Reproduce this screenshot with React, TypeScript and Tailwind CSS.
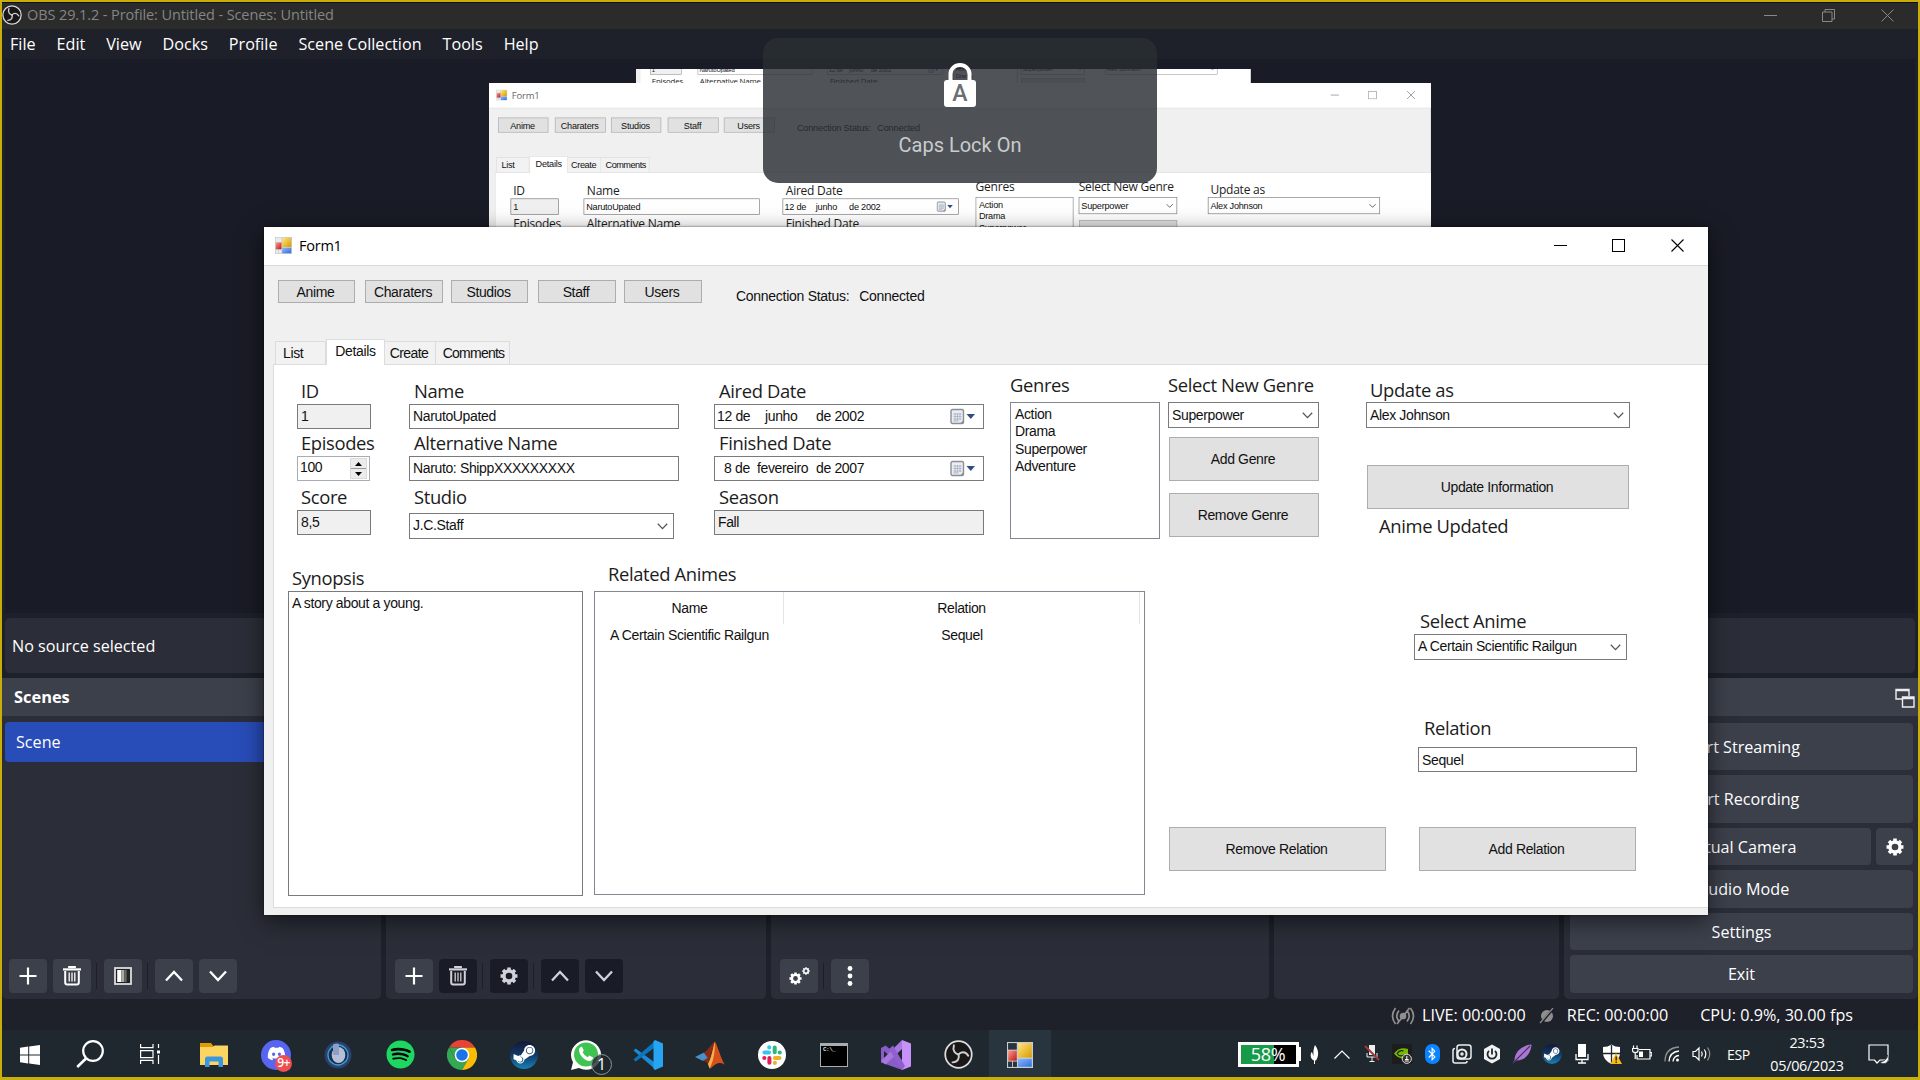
import React from "react";
import { FaBluetoothB, FaDiscord, FaSpotify, FaSteamSymbol, FaWhatsapp } from "react-icons/fa";

type P = { children?: React.ReactNode; className?: string };

/* ---------- WinForms window ---------- */

function FormIcon({ size = 17 }: { size?: number }) {
  return (
    <svg width={size} height={size} viewBox="0 0 17 17">
      <defs>
        <linearGradient id="fy" x1="0" y1="0" x2="1" y2="1">
          <stop offset="0" stopColor="#ffe680" />
          <stop offset="1" stopColor="#d99a00" />
        </linearGradient>
        <linearGradient id="fb" x1="0" y1="0" x2="1" y2="1">
          <stop offset="0" stopColor="#8ab8ff" />
          <stop offset="1" stopColor="#2f6ee0" />
        </linearGradient>
        <linearGradient id="fr" x1="0" y1="0" x2="1" y2="1">
          <stop offset="0" stopColor="#ff9a8a" />
          <stop offset="1" stopColor="#c01818" />
        </linearGradient>
      </defs>
      <rect x="0" y="0" width="17" height="17" fill="#c9ccd1" />
      <rect x="0.7" y="0.7" width="5.700" height="4.300" fill={size > 20 ? "#28343e" : "#e8eaee"} />
      <rect x="0.7" y="12.800" width="2.600" height="3.500" fill={size > 20 ? "#28343e" : "#e8eaee"} />
      <rect x="3.900" y="12.800" width="2.600" height="3.500" fill={size > 20 ? "#28343e" : "#e8eaee"} />
      <rect x="0.8" y="5.600" width="5.600" height="6.600" fill="url(#fr)" />
      <rect x="7.200" y="0.8" width="9" height="9.400" fill="url(#fy)" />
      <rect x="7.200" y="11" width="9" height="5.200" fill="url(#fb)" />
    </svg>
  );
}

function Label({ children, className = "", pad = "pl-[5px]" }: P & { pad?: string }) {
  return (
    <div className={`whitespace-nowrap pb-[2px] font-['Open_Sans',sans-serif] text-[18.4px] leading-[22px] text-[#1c1c1c] ${pad} ${className}`}>
      {children}
    </div>
  );
}

function Box({ children, className = "" }: P) {
  return <div className={`flex items-center whitespace-pre border border-[#7a7a7a] pl-[3px] ${className}`}>{children}</div>;
}

function Combo({ children, className = "" }: P) {
  return (
    <div className={`flex items-center justify-between border border-[#7a7a7a] bg-white pl-[3px] pr-[5px] ${className}`}>
      <span className="whitespace-nowrap">{children}</span>
      <svg width="11" height="7" viewBox="0 0 11 7" className="mt-px">
        <path d="M0.8 0.8 L5.5 5.6 L10.2 0.8" fill="none" stroke="#555" strokeWidth="1.3" />
      </svg>
    </div>
  );
}

function WinButton({ children, className = "" }: P) {
  return (
    <div className={`flex items-center justify-center whitespace-nowrap border border-[#adadad] bg-[#e1e1e1] pr-[2px] pt-px ${className}`}>
      {children}
    </div>
  );
}

function DateBox({ day, month, year, pad }: { day: string; month: string; year: string; pad: string }) {
  return (
    <div className="flex h-[25px] items-center border border-[#7a7a7a] bg-white pr-[7px]">
      <span className={`w-[42px] whitespace-pre ${pad}`}>{day}</span>
      <span className={`whitespace-nowrap ${month === "junho" ? "w-[59px] pl-[8px]" : "w-[59px]"}`}>{month}</span>
      <span className="flex-1 whitespace-nowrap">{year}</span>
      <svg width="26" height="17" viewBox="0 0 26 17">
        <rect x="1" y="1.5" width="12.5" height="14" rx="1.5" fill="#e9ecf2" stroke="#8a8f99" strokeWidth="1.4" />
        <path d="M3.5 6h8M3.5 8.5h8M3.5 11h8M3.5 13h5M5 5v8M7.5 5v8M10 5v7" stroke="#aab0bd" strokeWidth="0.8" />
        <path d="M10 15.5l3.5-3.5v3.5z" fill="#8a8f99" />
        <path d="M16.5 6h8.5l-4.2 5z" fill="#2f4f84" />
      </svg>
    </div>
  );
}

function Form({ inactive = false }: { inactive?: boolean }) {
  const glyph = inactive ? "#777" : "#000";
  return (
    <div className="flex h-[688px] w-[1444px] flex-col bg-[#f0f0f0] font-['Liberation_Sans',sans-serif] text-[14px] leading-[17px] tracking-[-0.36px] text-[#111]">
      <div className="flex h-[39px] shrink-0 items-center border-b border-[#d9d9d9] bg-white pb-px pl-[11px] pr-[24px]">
        <FormIcon />
        <span className={`ml-[7px] flex-1 pb-px font-['Open_Sans',sans-serif] text-[14.5px] tracking-[-0.25px] ${inactive ? "text-[#666]" : "text-black"}`}>
          Form1
        </span>
        <svg width="13" height="13" viewBox="0 0 13 13">
          <path d="M0 6.5h13" stroke={glyph} />
        </svg>
        <svg width="13" height="13" viewBox="0 0 13 13" className="ml-[45px]">
          <rect x="0.5" y="0.5" width="12" height="12" fill="none" stroke={glyph} />
        </svg>
        <svg width="13" height="13" viewBox="0 0 13 13" className="ml-[46px]">
          <path d="M0.5 0.5l12 12M12.5 0.5l-12 12" stroke={glyph} strokeWidth="1.1" />
        </svg>
      </div>

      <div className="flex h-[73px] shrink-0 pl-[14px] pt-[14px]">
        <WinButton className="h-[23px] w-[77px]">Anime</WinButton>
        <WinButton className="ml-[10px] h-[23px] w-[78px]">Charaters</WinButton>
        <WinButton className="ml-[8px] h-[23px] w-[77px]">Studios</WinButton>
        <WinButton className="ml-[10px] h-[23px] w-[78px]">Staff</WinButton>
        <WinButton className="ml-[8px] h-[23px] w-[78px]">Users</WinButton>
        <span className="ml-[34px] mt-[8px] tracking-[-0.28px]">Connection Status:</span>
        <span className="ml-[10px] mt-[8px] tracking-[-0.28px]">Connected</span>
      </div>

      <div className="flex h-[25px] shrink-0 items-end pl-[11px]">
        <div className="flex h-[23px] w-[51px] items-center border border-b-0 border-[#dcdcdc] bg-[#f2f2f2] pl-[7px] pt-px">List</div>
        <div className="z-10 -mb-px flex h-[26px] w-[59px] items-center justify-center border border-b-0 border-[#dcdcdc] bg-white pb-[2px]">
          Details
        </div>
        <div className="flex h-[23px] w-[51px] items-center justify-center border border-b-0 border-l-0 border-[#dcdcdc] bg-[#f2f2f2] pr-[2px] pt-px tracking-[-0.6px]">
          Create
        </div>
        <div className="flex h-[23px] w-[74px] items-center justify-center border border-b-0 border-l-0 border-[#dcdcdc] bg-[#f2f2f2] pl-[2px] pt-px tracking-[-0.75px]">
          Comments
        </div>
      </div>

      <div className="ml-[9px] flex h-[544px] flex-col border border-r-0 border-[#dcdcdc] bg-white">
        <div className="flex h-[185px] items-start">
          <div className="ml-[23px] mt-[15px] flex w-[74px] flex-col">
            <Label pad="pl-[4px]">ID</Label>
            <Box className="h-[25px] bg-[#f0f0f0]">1</Box>
            <Label className="mt-[3px]" pad="pl-[4px]">Episodes</Label>
            <div className="flex h-[25px] w-[73px] items-center border border-[#ababb5] bg-white pl-[2px] pr-[2px]">
              <span className="flex-1 pb-[2px]">100</span>
              <div className="flex h-[21px] w-[17px] flex-col border border-[#dadada] bg-[#ececec]">
                <div className="flex h-[10px] items-center justify-center border-b border-[#999]">
                  <svg width="7" height="4" viewBox="0 0 7 4"><path d="M0 4L3.5 0L7 4z" fill="#000" /></svg>
                </div>
                <div className="flex h-[9px] items-center justify-center">
                  <svg width="7" height="4" viewBox="0 0 7 4"><path d="M0 0L3.5 4L7 0z" fill="#000" /></svg>
                </div>
              </div>
            </div>
            <Label className="mt-[5px]" pad="pl-[4px]">Score</Label>
            <Box className="h-[25px] bg-[#f0f0f0] pb-px">8,5</Box>
          </div>

          <div className="ml-[38px] mt-[15px] flex w-[270px] flex-col">
            <Label>Name</Label>
            <Box className="h-[25px] bg-white">NarutoUpated</Box>
            <Label className="mt-[3px]">Alternative Name</Label>
            <Box className="h-[25px] bg-white">Naruto: ShippXXXXXXXXX</Box>
            <Label className="mt-[5px]">Studio</Label>
            <Combo className="mt-[3px] h-[26px] w-[265px] pb-px">J.C.Staff</Combo>
          </div>

          <div className="ml-[35px] mt-[15px] flex w-[270px] flex-col">
            <Label>Aired Date</Label>
            <DateBox day="12 de" month="junho" year="de 2002" pad="pl-[2px]" />
            <Label className="mt-[3px]">Finished Date</Label>
            <DateBox day="8 de" month="fevereiro" year="de 2007" pad="pl-[9px]" />
            <Label className="mt-[5px]">Season</Label>
            <Box className="h-[25px] bg-[#f0f0f0] pb-px">Fall</Box>
          </div>

          <div className="ml-[26px] mt-[9px] flex w-[150px] flex-col">
            <Label pad="pl-0">Genres</Label>
            <div className="mt-[4px] flex h-[137px] flex-col border border-[#828790] bg-white pl-[4px] pt-[3px] leading-[17.4px]">
              <span>Action</span>
              <span>Drama</span>
              <span>Superpower</span>
              <span>Adventure</span>
            </div>
          </div>

          <div className="ml-[8px] mt-[9px] flex w-[151px] flex-col">
            <Label pad="pl-0">Select New Genre</Label>
            <Combo className="mt-[4px] h-[26px]">Superpower</Combo>
            <WinButton className="ml-px mt-[9px] h-[44px]">Add Genre</WinButton>
            <WinButton className="ml-px mt-[12px] h-[44px]">Remove Genre</WinButton>
          </div>

          <div className="ml-[47px] mt-[14px] flex w-[264px] flex-col">
            <Label pad="pl-[4px]">Update as</Label>
            <Combo className="-mt-px h-[26px]">Alex Johnson</Combo>
            <WinButton className="mx-px mt-[37px] h-[44px]">Update Information</WinButton>
            <Label className="mt-[6px]" pad="pl-[13px]">Anime Updated</Label>
          </div>
        </div>

        <div className="flex items-start">
          <div className="ml-[14px] mt-[17px] flex w-[295px] flex-col">
            <Label pad="pl-[4px]">Synopsis</Label>
            <div className="h-[305px] border border-[#7a7a7a] bg-white pl-[3px] pt-[3px]">A story about a young.</div>
          </div>

          <div className="ml-[11px] mt-[13px] flex w-[551px] flex-col">
            <Label pad="pl-[14px]">Related Animes</Label>
            <div className="mt-[4px] flex h-[304px] flex-col border border-[#828790] bg-white text-center">
              <div className="flex h-[32px] items-center pr-[4px]">
                <div className="flex h-full w-[189px] items-center justify-center border-r border-[#e5e5e5] pl-px pt-px">Name</div>
                <div className="flex h-full flex-1 items-center justify-center border-r border-[#e5e5e5] pt-px">Relation</div>
              </div>
              <div className="flex pr-[4px] pt-[3px]">
                <div className="w-[189px] whitespace-nowrap">A Certain Scientific Railgun</div>
                <div className="flex-1">Sequel</div>
              </div>
            </div>
          </div>

          <WinButton className="ml-[24px] mt-[277px] h-[44px] w-[217px]">Remove Relation</WinButton>

          <div className="ml-[28px] mt-[60px] flex w-[224px] flex-col">
            <Label pad="pl-[6px]">Select Anime</Label>
            <Combo className="h-[26px] w-[213px] pb-px">A Certain Scientific Railgun</Combo>
            <Label className="mt-[57px]" pad="pl-[10px]">Relation</Label>
            <Box className="ml-[4px] mt-[6px] h-[25px] w-[219px] bg-white pt-px">Sequel</Box>
            <WinButton className="ml-[5px] mt-[55px] h-[44px] w-[217px]">Add Relation</WinButton>
          </div>
        </div>
      </div>
    </div>
  );
}

/* ---------- OBS chrome ---------- */

function ObsLogo({ size }: { size: number }) {
  return (
    <svg width={size} height={size} viewBox="0 0 28 28">
      <circle cx="14" cy="14" r="12.8" fill="#1a1718" stroke="#dcdcdc" strokeWidth="1.7" />
      <g fill="none" stroke="#cfcfcf" strokeWidth="1.9" strokeLinecap="round">
        <path d="M14 14C10.6 13.4 8 10 9.6 5.2" />
        <path d="M14 14C16.2 11.2 20.6 10.6 23.4 15.2" />
        <path d="M14 14C15.2 17.4 13.4 21.6 8.2 21.6" />
      </g>
    </svg>
  );
}

function Tool({ children, className = "", dark = false }: P & { dark?: boolean }) {
  return (
    <div className={`flex h-[34px] w-[38px] shrink-0 items-center justify-center rounded-[4px] pb-px ${dark ? "bg-[#191b26]" : "bg-[#3c404b]"} ${className}`}>
      {children}
    </div>
  );
}

const Sep = () => <div className="mx-[5px] h-[26px] w-px bg-[#1d1f28]" />;

const Plus = () => (
  <svg width="18" height="18" viewBox="0 0 18 18"><path d="M9 0.5v17M0.5 9h17" stroke="#fff" strokeWidth="2.2" /></svg>
);
const Trash = ({ c }: { c: string }) => (
  <svg width="20" height="20" viewBox="0 0 20 20" fill="none" stroke={c}>
    <path d="M1 3.4h18" strokeWidth="2.2" />
    <path d="M7 2V1h6v1" strokeWidth="1.8" />
    <path d="M3.2 5v11.5q0 2 2 2h9.600q2 0 2-2V5" strokeWidth="2" />
    <path d="M7.200 6.500v9M10 6.500v9M12.800 6.500v9" strokeWidth="1.3" />
  </svg>
);
const Chev = ({ c, up = false }: { c: string; up?: boolean }) => (
  <svg width="18" height="12" viewBox="0 0 18 12">
    <path d={up ? "M1 10.5L9 2L17 10.5" : "M1 1.5L9 10L17 1.5"} fill="none" stroke={c} strokeWidth="2.3" />
  </svg>
);
const Gear = ({ c, size = 18 }: { c: string; size?: number }) => (
  <svg width={size} height={size} viewBox="0 0 20 20">
    <circle cx="10" cy="10" r="5.6" fill="none" stroke={c} strokeWidth="3.8" />
    <path
      d="M10 0.6v3M10 16.4v3M0.6 10h3M16.4 10h3M3.35 3.35l2.1 2.1M14.55 14.55l2.1 2.1M3.35 16.65l2.1-2.1M14.55 5.45l2.1-2.1"
      stroke={c}
      strokeWidth="4"
    />
  </svg>
);

function SideButton({ children, className = "" }: P) {
  return <div className={`flex items-center justify-center rounded-[4px] bg-[#3c404b] pt-px ${className}`}>{children}</div>;
}

function Dock({ children, className = "" }: P) {
  return <div className={`flex shrink-0 flex-col justify-end rounded-b-[5px] bg-[#2b2e38] ${className}`}>{children}</div>;
}

/* ---------- Taskbar ---------- */

function Task({ children, active = false, line = false }: { children: React.ReactNode; active?: boolean; line?: boolean }) {
  return (
    <div className={`relative flex h-full w-[62px] shrink-0 items-center justify-center pt-[2px] ${active ? "bg-[#28343e]" : ""}`}>
      {children}
      {line && <div className="absolute -bottom-[3px] left-[6px] right-[5px] z-10 h-[2px] bg-[#e2cc30]" />}
    </div>
  );
}

const Tray = ({ children }: P) => <div className="flex w-[30px] shrink-0 items-center justify-center">{children}</div>;

function SteamDisc({ size }: { size: number }) {
  return (
    <div className={`flex items-center justify-center rounded-full bg-linear-to-b from-[#12183a] via-[#113a66] to-[#1583b8] ${size > 24 ? "size-[28px]" : "size-[20px]"}`}>
      <FaSteamSymbol size={size * 0.88} color="#fff" />
    </div>
  );
}

function Taskbar() {
  return (
    <div className="flex h-[47px] shrink-0 items-stretch bg-[#1e282e] text-white">
      <div className="ml-[-3px] flex w-[60px] items-center justify-center pl-px pt-[3px]">
        <svg width="20" height="20" viewBox="0 0 20 20" fill="#fff">
          <path d="M0 2.8L8.2 1.6v8H0zM9.2 1.4L20 0v9.6H9.2zM0 10.5h8.2v8L0 17.3zM9.2 10.5H20V20L9.2 18.6z" />
        </svg>
      </div>
      <div className="flex w-[61px] items-center justify-center pt-px">
        <svg width="28" height="28" viewBox="0 0 28 28" fill="none" stroke="#fff">
          <circle cx="17" cy="11" r="9.8" strokeWidth="2.2" />
          <path d="M10 18.5L1.2 27" strokeWidth="2.6" />
        </svg>
      </div>
      <div className="flex w-[60px] items-center justify-center pt-px">
        <svg width="20" height="20" viewBox="0 0 20 20" fill="none" stroke="#fff" strokeWidth="1.2">
          <path d="M0.6 0v3.6h12.4V0M0.6 20v-3.6h12.4V20M0.6 6.6h12.4v7H0.6zM18.5 0v4M18.5 11v9" />
          <path d="M17 6.5h3v3h-3z" fill="#fff" stroke="none" />
        </svg>
      </div>
      <div className="w-[3px]" />
      <Task>
        <svg width="28" height="24" viewBox="0 0 28 24">
          <path d="M0 0h11l2.4 3H28v8H0z" fill="#e09c00" />
          <path d="M0 4h13l1.5-1.5H28V22H0z" fill="#fcd462" />
          <path d="M5 24v-8q0-2.5 2.5-2.5h13Q23 13.5 23 16v8h-4.500v-5.500h-9V24z" fill="#3a96dd" />
        </svg>
      </Task>
      <Task line>
        <div className="relative flex size-[30px] items-center justify-center rounded-full bg-[#5865f2]">
          <FaDiscord size={19} color="#fff" className="-mt-[2px]" />
          <span className="absolute -bottom-[2px] -right-[1px] flex size-[17px] items-center justify-center rounded-full bg-[#ed4e50] text-[12px] font-semibold leading-none tracking-[-0.5px]">9+</span>
        </div>
      </Task>
      <Task>
        <svg width="28" height="28" viewBox="0 0 28 28">
          <circle cx="14" cy="14" r="13.500" fill="#2c3e72" />
          <circle cx="14" cy="14" r="10" fill="#1e2c50" stroke="#35a5c5" strokeWidth="1.3" />
          <ellipse cx="14.500" cy="14" rx="6.800" ry="8" fill="#b4bfda" />
          <path d="M9 3.500q5-2 6 0V14H9z" fill="#8f9fc4" />
        </svg>
      </Task>
      <Task>
        <div className="flex size-[27px] items-center justify-center rounded-full bg-black">
          <FaSpotify size={29} color="#1ed760" className="shrink-0" />
        </div>
      </Task>
      <Task line>
        <svg width="30" height="30" viewBox="0 0 30 30">
          <path d="M2 7.500A15 15 0 0 1 28 7.500H15z" fill="#ea4335" />
          <path d="M2 7.500A15 15 0 0 0 15 30L21.500 18.750 15 15 8.500 18.750z" fill="#34a853" />
          <path d="M28 7.500A15 15 0 0 1 15 30L21.500 18.750 15 7.500z" fill="#fbbc05" />
          <path d="M2 7.500L8.500 18.750 15 15V7.500z" fill="#34a853" />
          <circle cx="15" cy="15" r="7.300" fill="#fff" />
          <circle cx="15" cy="15" r="5.800" fill="#1a73e8" />
        </svg>
      </Task>
      <Task><SteamDisc size={28} /></Task>
      <Task>
        <div className="relative flex size-[30px] items-center justify-center">
          <svg width="30" height="30" viewBox="0 0 30 30" className="absolute">
            <path d="M0 30L2 22.300A15 14.700 0 1 1 8 28z" fill="#fff" />
            <circle cx="15" cy="14.500" r="12" fill="#3fc351" />
          </svg>
          <svg width="16" height="16" viewBox="0 0 16 16" className="relative -mt-px" fill="#fff">
            <path d="M1 3.500C1.500 1.500 3 0.500 4 0.800L5.800 4.600 4.600 6.300Q6.200 9.600 9.600 11.200L11.300 9.600 15 11.400C15.200 13.500 13 15.300 10.800 15 5.600 14 0.800 8.500 1 3.500z" />
          </svg>
          <span className="absolute -bottom-[5px] -right-[11px] flex size-[21px] items-center justify-center rounded-full border border-[#8d9598] bg-[#1e282ecc] font-['Open_Sans',sans-serif] text-[16px] leading-none">1</span>
        </div>
      </Task>
      <Task>
        <svg width="30" height="30" viewBox="0 0 30 30">
          <path d="M0.500 10.500l2.200-2L22.500 23v6.500z" fill="#1b8ad6" />
          <path d="M0.500 19.500l2.200 2L22.500 7V0.500z" fill="#0b74bd" />
          <path d="M22 0l8 3.500v23L22 30l-1.500-1.500V1.500z" fill="#27a5f2" />
        </svg>
      </Task>
      <Task>
        <svg width="30" height="28" viewBox="0 0 30 28">
          <path d="M0 16l9-4.500 4 5.500-5 3z" fill="#4a8fc6" />
          <path d="M9 11.500C13 9.500 16 3 20 0.500L13 23q-2-3.500-5-3l5-3z" fill="#8e2a14" />
          <path d="M20 0.500C23 6 26 18 30 24c-4-3-8-3-15 4-0.500-2-1-4-2-5C17 15 18 6 20 0.500z" fill="#d6501e" />
          <path d="M20 0.500C20 9 19 20 14.500 27.500L13 23C17 16 18 6 20 0.500z" fill="#f5b347" />
        </svg>
      </Task>
      <Task>
        <svg width="28" height="28" viewBox="0 0 28 28">
          <circle cx="14" cy="14" r="14" fill="#fff" />
          <g strokeWidth="4" strokeLinecap="round" fill="none">
            <path d="M6.500 11.500h4.500" stroke="#36c5f0" /><path d="M11.200 6.300v0.200" stroke="#36c5f0" />
            <path d="M16.700 6.500v4.700" stroke="#2eb67d" /><path d="M21.700 11.500h0.100" stroke="#2eb67d" />
            <path d="M16.900 16.900h4.600" stroke="#ecb22e" /><path d="M16.900 21.800v0.100" stroke="#ecb22e" />
            <path d="M11.400 16.900v4.800" stroke="#e01e5a" /><path d="M6.300 16.900h0.100" stroke="#e01e5a" />
          </g>
        </svg>
      </Task>
      <Task line>
        <div className="flex h-[24px] w-[28px] flex-col border border-t-[3px] border-[#a8adb0] bg-black pl-[2px] font-['Liberation_Mono',monospace] text-[6px] font-bold leading-[8px] tracking-[-0.5px] text-[#ddd]">
          C:\_
        </div>
      </Task>
      <Task line>
        <svg width="30" height="30" viewBox="0 0 30 30">
          <path d="M0 8l4.500-2.500L25 22l-3.500 8L0 22.500z" fill="#8a5cc7" />
          <path d="M3 11v8.500L7.500 15z" fill="#1e282e" />
          <path d="M0 21l21-21v9L4.500 24.500z" fill="#a877e0" />
          <path d="M21 0l9 3.500v23L21 30z" fill="#c692f7" />
          <path d="M21 10v10l-6-5z" fill="#1e282e" />
          <path d="M8 9l4-3.500L24 26l-3 4z" fill="#8f5fd0" />
        </svg>
      </Task>
      <Task line><ObsLogo size={29} /></Task>
      <Task active line><FormIcon size={26} /></Task>

      <div className="ml-[187px] flex items-center pt-px">
        <div className="flex items-center">
          <div className="flex h-[25px] w-[61px] items-center justify-center border-[3px] border-white bg-linear-to-r from-[#169b48] from-60% to-black to-60% pr-px font-['Open_Sans',sans-serif] text-[18px] leading-none tracking-[-0.4px]">
            58%
          </div>
          <div className="h-[14px] w-[2px] bg-white" />
        </div>
        <svg width="9" height="19" viewBox="0 0 9 19" className="ml-[9px]">
          <path d="M5 0C9 5 9 11 6 15.500H5V19H4v-3.500C0 14 0 8 2 7q1 3 1.500 4Q3 4 5 0z" fill="#fff" />
        </svg>
        <div className="w-[8px]" />
        <Tray>
          <svg width="16" height="9" viewBox="0 0 16 9"><path d="M0.500 8.500L8 1l7.500 7.500" fill="none" stroke="#fff" strokeWidth="1.200" /></svg>
        </Tray>
        <Tray>
          <svg width="16" height="20" viewBox="0 0 16 20">
            <rect x="5" y="1" width="6" height="10" fill="#eee" />
            <path d="M3 9v4h10V9M8 13v5M5.500 17.500h5" stroke="#eee" fill="none" />
            <path d="M1 2l14 14" stroke="#a5383b" strokeWidth="2" />
          </svg>
        </Tray>
        <Tray>
          <svg width="20" height="20" viewBox="0 0 20 20">
            <rect width="20" height="20" fill="#1d1d1d" />
            <path d="M2 9.500Q8 2 16 5v9Q7 16 2 9.500z" fill="#76b900" />
            <path d="M5 9.500q3-4 6.500-2.500M5 9.500q3 4 7 1.500" stroke="#1d1d1d" fill="none" strokeWidth="1.200" />
            <circle cx="14.800" cy="14.800" r="4.600" fill="#333" stroke="#ddd" />
            <path d="M14.800 12v4M13 15.500h3.600M12.800 17h4" stroke="#fff" />
          </svg>
        </Tray>
        <Tray>
          <div className="flex h-[20px] w-[15px] items-center justify-center rounded-[7px] bg-[#0a84ff]"><FaBluetoothB size={14} color="#fff" /></div>
        </Tray>
        <Tray>
          <svg width="20" height="20" viewBox="0 0 20 20" fill="none" stroke="#eee" strokeWidth="1.500">
            <rect x="5" y="1" width="14" height="14" rx="2.500" />
            <path d="M3 4.500q-2 0-2 2V17q0 2 2 2h10q2 0 2-2" />
            <circle cx="10" cy="10" r="4.500" strokeWidth="2" /><circle cx="10" cy="10" r="1" />
          </svg>
        </Tray>
        <Tray>
          <svg width="18" height="20" viewBox="0 0 18 20">
            <path d="M9 0.500l8 4.500v10l-8 4.500L1 15V5z" fill="#f2f2f2" />
            <path d="M6 6.800a4.500 4.500 0 1 0 6 0" stroke="#1e282e" fill="none" strokeWidth="1.800" />
            <path d="M9 4.500v6" stroke="#1e282e" strokeWidth="1.800" />
          </svg>
        </Tray>
        <Tray>
          <svg width="20" height="20" viewBox="0 0 20 20">
            <path d="M19.500 0.500C12 1 3 6 2.500 16L0.500 19.500l4-3C14 16 19 9 19.500 0.500z" fill="#a977cf" />
            <path d="M18 2L1 19" stroke="#4e2877" strokeWidth="1.200" />
          </svg>
        </Tray>
        <Tray><SteamDisc size={20} /></Tray>
        <Tray>
          <svg width="14" height="20" viewBox="0 0 14 20">
            <rect x="3" y="0" width="8" height="13" fill="#fff" />
            <path d="M1 10v5.500h12V10M7 15.500V19M3 19h8" stroke="#fff" fill="none" strokeWidth="1.300" />
          </svg>
        </Tray>
        <Tray>
          <svg width="20" height="20" viewBox="0 0 20 20">
            <path d="M9.500 0.500Q13 3 18 3v6q0 7-8.500 11Q1 16 1 9V3q5 0 8.500-2.500z" fill="#fff" />
            <path d="M9.500 1v18M1 9.500h17" stroke="#1e282e" strokeWidth="1.300" />
            <path d="M14 9l6 11H8.500z" fill="#fcb913" />
            <path d="M14.200 12.500v4M14.200 17.500v1.500" stroke="#222" strokeWidth="1.400" />
          </svg>
        </Tray>
        <Tray>
          <svg width="20" height="18" viewBox="0 0 20 18" fill="none" stroke="#fff" strokeWidth="1.200">
            <path d="M7 4.500h11v9.500H5V10M18.500 7.500h1.300v3.500h-1.300" />
            <path d="M1.500 0.500V3M5 0.500V3M0.500 3.500h5.500v2q0 2-2.700 2t-2.800-2zM3.200 7.500V14" />
            <path d="M7 6.500h4v5.500H7z" fill="#fff" stroke="none" />
          </svg>
        </Tray>
        <Tray>
          <svg width="16" height="18" viewBox="0 0 16 18" fill="none" strokeWidth="1.300">
            <path d="M1 16.500Q1 3 15 2" stroke="#8d9396" /><path d="M5 16.500Q5.500 7 15 6" stroke="#fff" />
            <path d="M9 16.500q0.500-5.500 6-6" stroke="#fff" /><circle cx="13.500" cy="15" r="1.500" fill="#fff" />
          </svg>
        </Tray>
        <Tray>
          <svg width="20" height="16" viewBox="0 0 20 16" fill="none" stroke="#fff" strokeWidth="1.200">
            <path d="M1 5.500h2.500L7 2v12l-3.500-3.500H1zM9.500 5.500q1.500 2.500 0 5M12.300 3.500q3 4.500 0 9" />
            <path d="M15.500 1.500q4.500 6.500 0 13" stroke="#8d9396" />
          </svg>
        </Tray>
        <span className="ml-[10px] w-[26px] font-['Open_Sans',sans-serif] text-[14px] tracking-[-0.4px]">ESP</span>
        <div className="ml-[12px] flex w-[84px] flex-col items-center font-['Open_Sans',sans-serif] text-[14.4px] leading-[23px] tracking-[-0.3px]">
          <span>23:53</span>
          <span>05/06/2023</span>
        </div>
        <svg width="22" height="21" viewBox="0 0 22 21" className="ml-[19px]">
          <path d="M1 1h19v15h-8l-3 3-2.500-3H1z" fill="none" stroke="#fff" strokeWidth="1.200" />
          <path d="M19.500 11q2.500 5-1 8-4 2-7-1 7 0 8-7z" fill="#fff" stroke="#1e282e" strokeWidth="0.700" />
        </svg>
      </div>
    </div>
  );
}

const MENU = ["File", "Edit", "View", "Docks", "Profile", "Scene Collection", "Tools", "Help"];

export default function App() {
  return (
    <div className="relative flex h-[1080px] w-[1920px] flex-col overflow-hidden border-2 border-b-[3px] border-[#c9ae0a] bg-[#1e202a] font-['Open_Sans',sans-serif] text-[16.15px] text-white">
      <div className="flex h-[27px] shrink-0 items-center border-t border-[#111] bg-[#2b2b2b] pb-[2px] pr-[24px]">
        <ObsLogo size={20} />
        <span className="ml-[5px] flex-1 text-[14.5px] tracking-[-0.1px] text-[#858585]">OBS 29.1.2 - Profile: Untitled - Scenes: Untitled</span>
        <svg width="13" height="13" viewBox="0 0 13 13"><path d="M0 6.500h13" stroke="#888" /></svg>
        <svg width="13" height="13" viewBox="0 0 13 13" className="ml-[45px]">
          <path d="M0.500 3h9.500v9.500H0.500zM3 3V0.500h9.500V10H10" fill="none" stroke="#888" />
        </svg>
        <svg width="13" height="13" viewBox="0 0 13 13" className="ml-[46px]"><path d="M0.500 0.500l12 12M12.500 0.500l-12 12" stroke="#888" /></svg>
      </div>

      <div className="flex h-[30px] shrink-0 items-center gap-[21px] bg-[#1f212a] pl-[8px] pt-px">
        {MENU.map((m) => <span key={m} className="whitespace-nowrap">{m}</span>)}
      </div>

      {/* preview canvas */}
      <div className="relative ml-[3px] mr-[3px] h-[554px] shrink-0 overflow-hidden bg-[#191b26]">
        <div className="absolute left-[631px] top-[10px] h-[400px] w-[615px] overflow-hidden">
          <div className="absolute left-0 top-[-80px] origin-top-left scale-[0.4256]"><Form inactive /></div>
        </div>
        <div className="absolute left-[484px] top-[24px] origin-top-left scale-[0.6523]"><Form inactive /></div>
      </div>

      <div className="mx-[3px] mt-[5px] flex h-[55px] shrink-0 items-center rounded-[5px] bg-[#2b2e38] pl-[7px] pt-px">No source selected</div>

      <div className="mt-[5px] flex h-[38px] shrink-0 items-center justify-between bg-[#3c404b] pl-[12px] pr-[3px] pt-px">
        <span className="text-[16.4px] font-bold">Scenes</span>
        <svg width="20" height="20" viewBox="0 0 20 20" fill="none" stroke="#eee" strokeWidth="1.400">
          <path d="M7 11H1V1.500h13V8M1 2.500h13" /><path d="M7.500 9H19v10H7.500zM7.500 10.500H19" />
        </svg>
      </div>

      <div className="flex h-[283px] shrink-0 gap-[5px]">
        <Dock className="w-[379px] justify-between!">
          <div className="ml-[3px] mt-[6px] flex h-[40px] items-center rounded-[4px] bg-[#284cb8] pl-[11px] pt-px">Scene</div>
          <div className="mb-[6px] flex items-center pl-[7px]">
            <Tool><Plus /></Tool>
            <Tool className="ml-[6px]"><Trash c="#fff" /></Tool>
            <Sep />
            <Tool className="ml-[2px]">
              <svg width="18" height="18" viewBox="0 0 18 18">
                <rect x="1" y="1" width="16" height="16" fill="#222" stroke="#ddd" strokeWidth="1.800" />
                <rect x="3.200" y="3" width="4" height="12" fill="#fff" /><rect x="7.200" y="3" width="3" height="12" fill="#aaa" /><rect x="10.200" y="3" width="2.500" height="12" fill="#666" />
              </svg>
            </Tool>
            <Sep />
            <Tool className="ml-[2px]"><Chev c="#fff" up /></Tool>
            <Tool className="ml-[6px]"><Chev c="#fff" /></Tool>
          </div>
        </Dock>
        <Dock className="w-[380px] pb-[6px] pl-[9px]">
          <div className="flex items-center">
            <Tool><Plus /></Tool>
            <Tool className="ml-[6px]" dark><Trash c="#d0d2d8" /></Tool>
            <Sep />
            <Tool className="ml-[2px]" dark><Gear c="#d0d2d8" /></Tool>
            <Sep />
            <Tool className="ml-[2px]" dark><Chev c="#d0d2d8" up /></Tool>
            <Tool className="ml-[6px]" dark><Chev c="#d0d2d8" /></Tool>
          </div>
        </Dock>
        <Dock className="w-[498px] pb-[6px] pl-[9px]">
          <div className="flex items-center">
            <Tool>
              <div className="flex">
                <div className="mt-[5px]"><Gear c="#fff" size={13} /></div>
                <div><Gear c="#fff" size={8} /></div>
              </div>
            </Tool>
            <Sep />
            <Tool className="ml-[2px]">
              <svg width="6" height="20" viewBox="0 0 6 20" fill="#fff"><circle cx="3" cy="2.500" r="2.400" /><circle cx="3" cy="10" r="2.400" /><circle cx="3" cy="17.500" r="2.400" /></svg>
            </Tool>
          </div>
        </Dock>
        <Dock className="w-[285px]" />
        <Dock className="min-w-0 flex-1 justify-start! gap-[5px] pl-[6px] pr-[5px] pt-[7px]">
          <SideButton className="h-[47px]">Start Streaming</SideButton>
          <SideButton className="h-[48px]">Start Recording</SideButton>
          <div className="flex h-[37px] gap-[5px]">
            <SideButton className="flex-1">Start Virtual Camera</SideButton>
            <SideButton className="w-[37px]"><Gear c="#fff" size={18} /></SideButton>
          </div>
          <SideButton className="h-[38px]">Studio Mode</SideButton>
          <SideButton className="h-[37px]">Settings</SideButton>
          <SideButton className="h-[38px]">Exit</SideButton>
        </Dock>
      </div>

      <div className="flex h-[31px] shrink-0 items-center justify-end pr-[65px] pt-[2px]">
        <svg width="24" height="18" viewBox="0 0 24 18" fill="none" stroke="#8f8f8f" strokeWidth="1.700">
          <path d="M4.500 1Q-1.500 9 4.500 17M8 3.500Q3.500 9 8 14.500M19.500 1q6 8 0 16M16 3.500q4.500 5.500 0 11M18.500 1L6 17" />
          <circle cx="12" cy="9" r="2.500" fill="#8f8f8f" />
        </svg>
        <span className="ml-[7px]">LIVE: 00:00:00</span>
        <svg width="16" height="16" viewBox="0 0 16 16" className="ml-[13px]">
          <circle cx="8" cy="8" r="6" fill="#8f8f8f" /><path d="M15 0L1 16" stroke="#1e202a" strokeWidth="2.500" /><path d="M14 0L1 15" stroke="#8f8f8f" strokeWidth="1.200" />
        </svg>
        <span className="ml-[12px]">REC: 00:00:00</span>
        <span className="ml-[32px]">CPU: 0.9%, 30.00 fps</span>
      </div>

      <Taskbar />

      {/* lock-state toast */}
      <div className="absolute left-[761px] top-[36px] flex h-[145px] w-[394px] flex-col items-center rounded-[15px] bg-[rgba(42,46,51,0.82)] pt-[25px]">
        <div className="relative flex h-[44px] w-[32px] items-end justify-center">
          <svg width="32" height="44" viewBox="0 0 32 44" className="absolute left-0 top-0">
            <path d="M6.500 20V11a9.500 9 0 0 1 19 0V20" fill="none" stroke="#fff" strokeWidth="4" />
            <rect x="0" y="17" width="32" height="27" rx="3" fill="#fff" />
          </svg>
          <span className="relative font-['Roboto',sans-serif] text-[23px] font-medium leading-[27px] text-[#6b6e72]">A</span>
        </div>
        <span className="mt-[25px] font-['Roboto',sans-serif] text-[20px] leading-[26px] text-[#c9cbcd]">Caps Lock On</span>
      </div>

      <div className="absolute left-[262px] top-[225px] shadow-[0_6px_22px_rgba(0,0,0,0.55),0_0_2px_rgba(0,0,0,0.6)]">
        <Form />
      </div>
    </div>
  );
}
